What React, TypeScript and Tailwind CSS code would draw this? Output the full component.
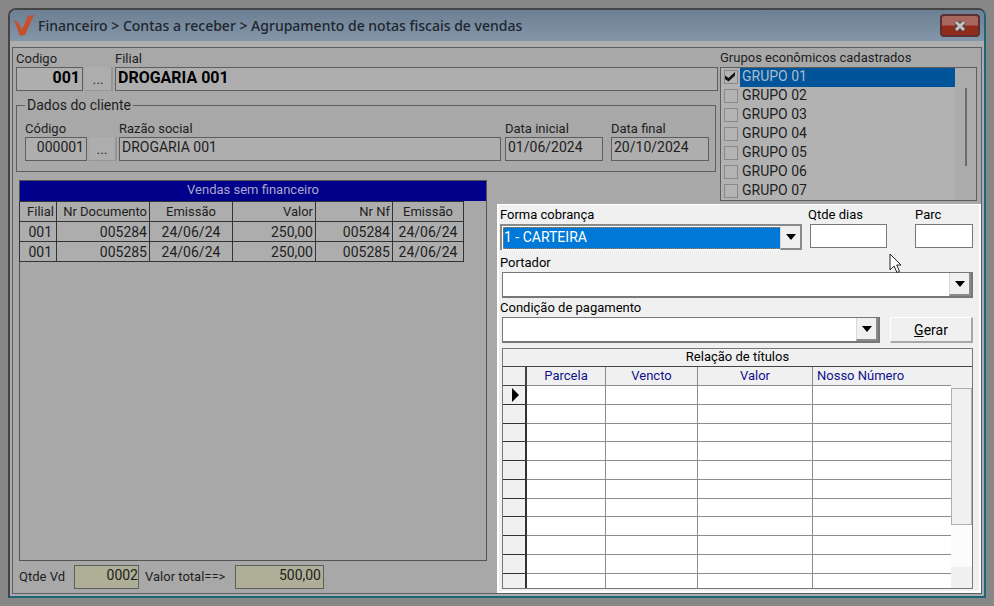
import { useState } from "react";
import type { ReactNode } from "react";
import clsx from "clsx";

const GROUPS = ["01", "02", "03", "04", "05", "06", "07"];

const SALES = [
  { branch: "001", doc: "005284", issued: "24/06/24", value: "250,00", nf: "005284", nfIssued: "24/06/24" },
  { branch: "001", doc: "005285", issued: "24/06/24", value: "250,00", nf: "005285", nfIssued: "24/06/24" },
];

const TITLE_ROWS = Array.from({ length: 11 }, (_, i) => i);

type FieldProps = {
  id: string;
  label: string;
  value?: string;
  className?: string;
  inputClassName?: string;
};

/** Label stacked on top of a flat, dimmed text box. */
function Field({ id, label, value = "", className, inputClassName }: FieldProps) {
  return (
    <div className={clsx("flex flex-col", className)}>
      <label htmlFor={id} className="h-4 text-[13px] leading-4 whitespace-nowrap">
        {label}
      </label>
      <input
        id={id}
        defaultValue={value}
        className={clsx(
          "h-6 w-full min-w-0 border border-[#5e5e5e] bg-[#aeaeae] px-0.5 pb-1 outline-none",
          inputClassName,
        )}
      />
    </div>
  );
}

function LookupButton() {
  return (
    <button
      type="button"
      aria-label="Pesquisar"
      className="h-6 w-7 shrink-0 border-r-2 border-b border-[#969696] bg-[#adadad] text-[#333]"
    >
      ...
    </button>
  );
}

type ComboProps = {
  id: string;
  label: string;
  focused?: boolean;
  className?: string;
  children?: ReactNode;
};

function Combo({ id, label, focused, className, children }: ComboProps) {
  return (
    <div className={clsx("flex flex-col", className)}>
      <label htmlFor={id} className="h-[18px] text-[13px] leading-[18px] whitespace-nowrap">
        {label}
      </label>
      <div
        className={clsx(
          "relative h-[26px]",
          focused
            ? "border-t-2 border-l-2 border-[#8a8a8a] bg-white p-px"
            : "ml-0.5 border border-r-2 border-b-2 border-[#777] bg-white",
        )}
      >
        <select
          id={id}
          className={clsx(
            "block h-full w-full appearance-none pb-0.5 outline-none",
            focused ? "border border-dotted border-[#d07a30] bg-[#0078d7] text-white" : "bg-white",
          )}
        >
          {children}
        </select>
        <span className="pointer-events-none absolute inset-y-0 right-0 flex w-[22px] items-center justify-center border-r-2 border-b-2 border-l border-[#8a8a8a] border-l-[#d8d8d8] bg-[#f0f0f0]">
          <svg width="10" height="6" viewBox="0 0 10 6">
            <path d="M0 0h10L5 6z" fill="#000" />
          </svg>
        </span>
      </div>
    </div>
  );
}

function GroupList() {
  const [checked, setChecked] = useState<Set<string>>(new Set(["01"]));

  function toggle(id: string) {
    const next = new Set(checked);
    if (next.has(id)) next.delete(id);
    else next.add(id);
    setChecked(next);
  }

  return (
    <div className="col-start-3 row-span-2 row-start-1 pt-0.5 pr-1 pl-0.5">
      <p className="h-[17px] text-[13px] leading-4 whitespace-nowrap">Grupos econômicos cadastrados</p>
      <div className="flex h-[134px] border border-[#5e5e5e] bg-[#b2b2b2]">
        <ul className="flex flex-1 flex-col">
          {GROUPS.map((id, i) => (
            <li key={id} className="flex-1">
              <label className="flex h-full items-center">
                <span className="relative flex w-[19px] shrink-0 justify-center">
                  <input
                    type="checkbox"
                    checked={checked.has(id)}
                    onChange={() => toggle(id)}
                    className="h-3.5 w-3.5 appearance-none border border-[#888] bg-[#b4b4b4]"
                  />
                  {checked.has(id) && (
                    <svg
                      className="pointer-events-none absolute top-0.5 left-1"
                      width="10"
                      height="10"
                      viewBox="0 0 10 10"
                    >
                      <path d="M0 3.5 3.5 6 10 0v3.5L3.5 9.5 0 7z" fill="#111" />
                    </svg>
                  )}
                </span>
                <span
                  className={clsx(
                    "flex h-full flex-1 items-center pb-0.5 pl-0.5",
                    i === 0 && "bg-[#00549a] text-[#a9bccb]",
                  )}
                >
                  GRUPO {id}
                </span>
              </label>
            </li>
          ))}
        </ul>
        <div className="flex w-[21px] justify-center bg-[#acacac]">
          <span className="mt-5 h-[78px] w-0.5 bg-[#6a6a6a]" />
        </div>
      </div>
    </div>
  );
}

function SalesTable() {
  const right = "border border-[#333] pr-0.5";
  const center = "border border-[#333] text-center";
  return (
    <div className="min-h-0 flex-1 border border-[#555]">
      <p className="h-5 bg-[#00008a] text-center text-[13px] leading-[18px] text-[#a9a9c8]">
        Vendas sem financeiro
      </p>
      <table className="-ml-px w-[444px] table-fixed border-collapse bg-[#adadad] text-right whitespace-nowrap">
        <colgroup>
          <col className="w-[37px]" />
          <col className="w-[93px]" />
          <col className="w-[83px]" />
          <col className="w-[83px]" />
          <col className="w-[77px]" />
          <col className="w-[71px]" />
        </colgroup>
        <thead className="text-[13px]">
          <tr className="h-5">
            <th className={clsx(right, "font-normal")}>Filial</th>
            <th className={clsx(right, "font-normal")}>Nr Documento</th>
            <th className={clsx(center, "font-normal")}>Emissão</th>
            <th className={clsx(right, "font-normal")}>Valor</th>
            <th className={clsx(right, "font-normal")}>Nr Nf</th>
            <th className={clsx(center, "font-normal")}>Emissão</th>
          </tr>
        </thead>
        <tbody>
          {SALES.map((s) => (
            <tr key={s.doc} className="h-5">
              <td className="border border-[#333] pr-1">{s.branch}</td>
              <td className={right}>{s.doc}</td>
              <td className={center}>{s.issued}</td>
              <td className={right}>{s.value}</td>
              <td className={right}>{s.nf}</td>
              <td className={center}>{s.nfIssued}</td>
            </tr>
          ))}
        </tbody>
      </table>
    </div>
  );
}

function TitlesGrid() {
  const cell = "border-r border-b border-[#8c8c8c]";
  return (
    <div className="mt-[5px] mr-1.5 ml-[3px] flex min-h-0 flex-1 flex-col border border-[#777] bg-white">
      <p className="h-[18px] shrink-0 border-b border-[#444] bg-[#f0f0f0] text-center text-[13px] leading-4">
        Relação de títulos
      </p>
      <div className="flex min-h-0 flex-1">
        <div className="h-0 min-h-full flex-1 overflow-hidden">
          <table className="w-full table-fixed border-separate border-spacing-0">
            <colgroup>
              <col className="w-6" />
              <col className="w-[79px]" />
              <col className="w-[92px]" />
              <col className="w-[115px]" />
              <col />
            </colgroup>
            <thead className="bg-[#f0f0f0] text-[13px] text-[#10108c]">
              <tr className="h-[19px]">
                <th className="border-r-2 border-b border-[#444]" />
                <th className={clsx(cell, "font-normal")}>Parcela</th>
                <th className={clsx(cell, "font-normal")}>Vencto</th>
                <th className={clsx(cell, "font-normal")}>Valor</th>
                <th className="border-b border-[#8c8c8c] pl-1 text-left font-normal">Nosso Número</th>
              </tr>
            </thead>
            <tbody>
              {TITLE_ROWS.map((row) => (
                <tr key={row} className="h-[19px] nth-[4n+3]:h-[18px]">
                  <td className="border-r-2 border-b border-[#333] bg-[#f0f0f0] p-0">
                    {row === 0 && (
                      <svg className="ml-2 block" width="9" height="14" viewBox="0 0 9 14">
                        <path d="M1 0v14l7-7z" fill="#000" />
                      </svg>
                    )}
                  </td>
                  <td className={cell} />
                  <td className={cell} />
                  <td className={cell} />
                  <td className="border-b border-[#8c8c8c]" />
                </tr>
              ))}
            </tbody>
          </table>
        </div>
        <div className="flex w-[21px] flex-col bg-[#f0f0f0] pt-[21px]">
          <span className="h-[137px] border border-[#b0b0b0]" />
          <span className="h-[42px] bg-[#fcfcfc]" />
        </div>
      </div>
    </div>
  );
}

function BillingPanel() {
  const input = "h-6 border border-[#777] bg-white px-1 outline-none";
  const label = "h-[18px] text-[13px] leading-[18px]";
  return (
    <section className="relative col-span-2 col-start-2 row-start-3 flex flex-col border-2 border-t border-white bg-[#f0f0f0] pt-px pb-0.5 text-black">
      <div className="flex pr-1.5 pl-px">
        <Combo id="forma" label="Forma cobrança" focused className="flex-1">
          <option>1 - CARTEIRA</option>
        </Combo>
        <div className="ml-1.5 flex w-[107px] flex-col">
          <label htmlFor="dias" className={label}>
            Qtde dias
          </label>
          <input id="dias" className={clsx(input, "ml-0.5 w-[77px]")} />
        </div>
        <div className="flex w-[58px] flex-col">
          <label htmlFor="parc" className={label}>
            Parc
          </label>
          <input id="parc" className={clsx(input, "w-full")} />
        </div>
      </div>
      <Combo id="portador" label="Portador" className="mt-1 mr-1.5 ml-px" />
      <div className="mt-px flex items-end pr-1.5 pl-px">
        <Combo id="condicao" label="Condição de pagamento" className="flex-1" />
        <button
          type="button"
          className="ml-2.5 h-[26px] w-[83px] border border-r-2 border-b-2 border-[#a8a8a8] border-t-white border-l-white bg-[#f0f0f0]"
        >
          <span className="underline">G</span>erar
        </button>
      </div>
      <TitlesGrid />
      {/* mouse pointer */}
      <svg className="pointer-events-none absolute top-12 right-[77px]" width="13" height="21" viewBox="0 0 13 21">
        <path d="M1 1v16l4-4 3 6.500 2.500-1.200L7.700 12H12z" fill="#fff" stroke="#222" />
      </svg>
    </section>
  );
}

export default function App() {
  return (
    <main className="flex min-h-screen flex-col bg-[#878787] p-2 font-[Roboto,'Liberation_Sans',sans-serif] text-[14px] leading-4 text-[#1e1e1e]">
      <div className="flex flex-1 flex-col rounded-t-lg border-2 border-[#444] border-r-[#1f6575] border-b-[#1f6575] bg-[#a6acb2] px-0.5 pb-0.5">
        <header className="-mx-0.5 flex h-[31px] items-center rounded-t-md bg-linear-to-b from-[#6c7f93] to-[#8496a9] pr-1 pl-1">
          <svg width="20" height="22" viewBox="0 0 20 22">
            <path d="M0 5 4 7 8 14 14 1 20 0 11 20 6 21z" fill="#c4502e" />
          </svg>
          <h1 className="ml-1 flex-1 font-['Noto_Sans',sans-serif] text-[14px] font-medium text-[#20262e]">
            Financeiro &gt; Contas a receber &gt; Agrupamento de notas fiscais de vendas
          </h1>
          <button
            type="button"
            aria-label="Fechar"
            className="flex h-[23px] w-10 items-center justify-center rounded-sm border-2 border-[#5a3030] bg-linear-to-b from-[#a8685f] from-45% to-[#8f2c1e] to-55%"
          >
            <svg width="14" height="12" viewBox="0 0 14 12">
              <path d="M3 2l8 8M11 2l-8 8" stroke="#444" strokeWidth="5" />
              <path d="M3 2l8 8M11 2l-8 8" stroke="#c4c4c4" strokeWidth="3" />
            </svg>
          </button>
        </header>
        <div className="-mx-0.5 h-1.5 shrink-0 bg-[#adadad]" />

        <div className="grid flex-1 grid-cols-[484px_minmax(0,1fr)_263px] grid-rows-[128px_28px_minmax(0,1fr)] border border-[#5e5e5e] bg-[#a8a8a8]">
          <div className="col-span-2 row-start-1 flex flex-col pl-[3px]">
            <div className="flex items-end gap-0.5 pt-[3px]">
              <Field
                id="codigo"
                label="Codigo"
                value="001"
                className="w-[67px]"
                inputClassName="text-right text-[16px] font-bold text-black"
              />
              <LookupButton />
              <Field
                id="filial"
                label="Filial"
                value="DROGARIA 001"
                className="flex-1"
                inputClassName="text-[16px] font-bold text-black"
              />
            </div>
            <fieldset className="mt-1.5 mr-0.5 border border-[#5e5e5e] pr-1.5 pb-2.5 pl-2">
              <legend className="px-0.5">Dados do cliente</legend>
              <div className="flex items-end pt-2">
                <Field id="cliente" label="Código" value="000001" className="mr-0.5 w-[62px]" inputClassName="text-right" />
                <LookupButton />
                <Field id="razao" label="Razão social" value="DROGARIA 001" className="ml-0.5 flex-1" />
                <Field id="inicial" label="Data inicial" value="01/06/2024" className="ml-1 w-[98px]" />
                <Field id="final" label="Data final" value="20/10/2024" className="ml-2 w-[98px]" />
              </div>
            </fieldset>
          </div>

          <GroupList />

          <div className="col-start-1 row-span-2 row-start-2 flex flex-col pt-1 pr-2.5 pb-1 pl-1.5">
            <SalesTable />
            <div className="flex shrink-0 items-center pt-1">
              <label htmlFor="qtde" className="w-[55px] text-[13px] whitespace-nowrap">
                Qtde Vd
              </label>
              <input
                id="qtde"
                defaultValue="0002"
                className="h-6 w-[65px] border border-[#5e5e5e] bg-[#afaf98] pb-1 text-right outline-none"
              />
              <label htmlFor="total" className="ml-1.5 w-[90px] text-[13px] whitespace-nowrap">
                Valor total==&gt;
              </label>
              <input
                id="total"
                defaultValue="500,00"
                className="h-6 w-[89px] border border-[#5e5e5e] bg-[#afaf98] pr-0.5 pb-1 text-right outline-none"
              />
            </div>
          </div>

          <BillingPanel />
        </div>
      </div>
    </main>
  );
}
